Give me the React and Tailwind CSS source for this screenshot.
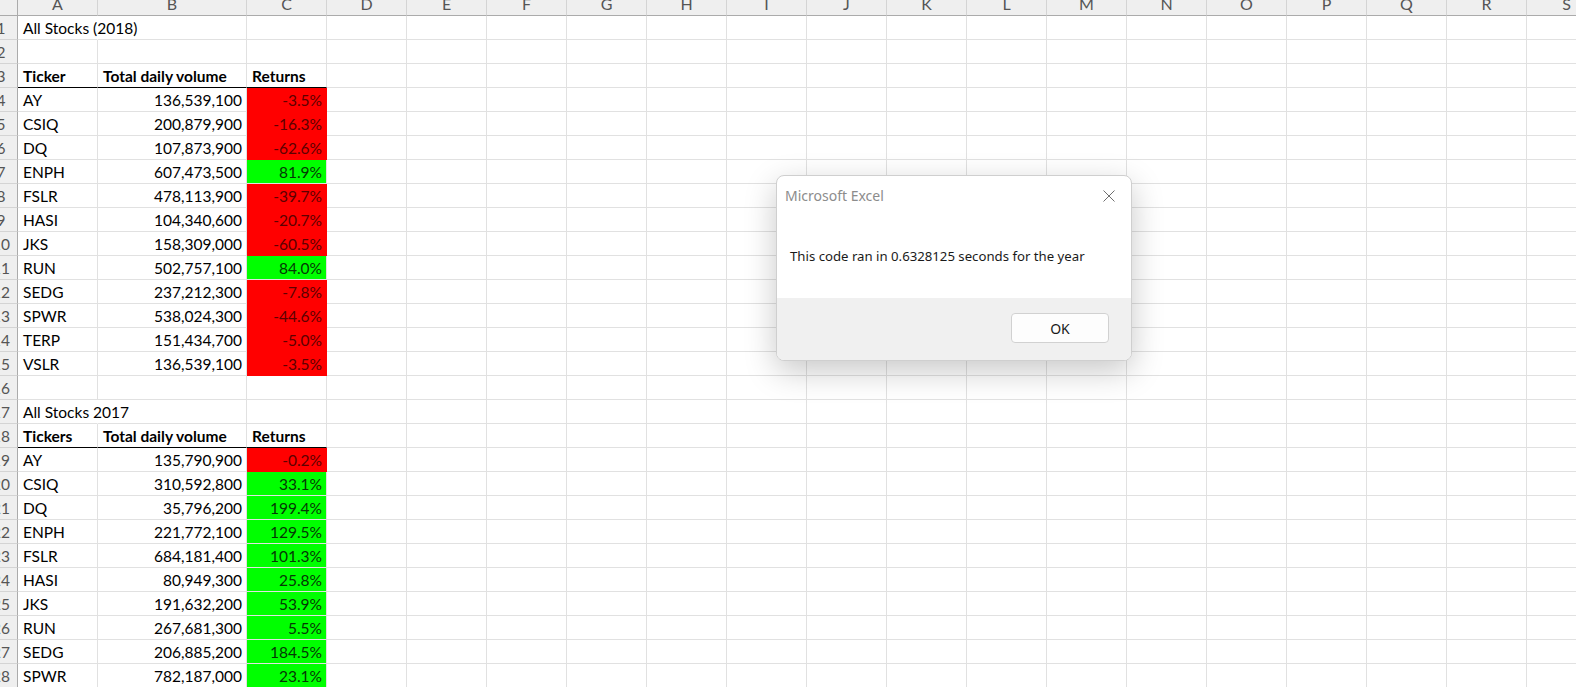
import React from 'react';

const COLS = ['A', 'B', 'C', 'D', 'E', 'F', 'G', 'H', 'I', 'J', 'K', 'L', 'M', 'N', 'O', 'P', 'Q', 'R', 'S'];

const colWidth = (c) => (c === 'B' ? 'w-[149px]' : 'w-[80px]');

const stocks2018 = [
  ['AY', '136,539,100', '-3.5%'],
  ['CSIQ', '200,879,900', '-16.3%'],
  ['DQ', '107,873,900', '-62.6%'],
  ['ENPH', '607,473,500', '81.9%'],
  ['FSLR', '478,113,900', '-39.7%'],
  ['HASI', '104,340,600', '-20.7%'],
  ['JKS', '158,309,000', '-60.5%'],
  ['RUN', '502,757,100', '84.0%'],
  ['SEDG', '237,212,300', '-7.8%'],
  ['SPWR', '538,024,300', '-44.6%'],
  ['TERP', '151,434,700', '-5.0%'],
  ['VSLR', '136,539,100', '-3.5%'],
];

const stocks2017 = [
  ['AY', '135,790,900', '-0.2%'],
  ['CSIQ', '310,592,800', '33.1%'],
  ['DQ', '35,796,200', '199.4%'],
  ['ENPH', '221,772,100', '129.5%'],
  ['FSLR', '684,181,400', '101.3%'],
  ['HASI', '80,949,300', '25.8%'],
  ['JKS', '191,632,200', '53.9%'],
  ['RUN', '267,681,300', '5.5%'],
  ['SEDG', '206,885,200', '184.5%'],
  ['SPWR', '782,187,000', '23.1%'],
];

const toRows = (list) => list.map(([a, b, c]) => ({ a, b, c, fill: c.startsWith('-') ? 'red' : 'green' }));

const rows = [
  { a: 'All Stocks (2018)', title: true },
  {},
  { a: 'Ticker', b: 'Total daily volume', c: 'Returns', head: true },
  ...toRows(stocks2018),
  {},
  { a: 'All Stocks 2017', title: true },
  { a: 'Tickers', b: 'Total daily volume', c: 'Returns', head: true },
  ...toRows(stocks2017),
];

const Cell = ({ col, row }) => {
  let cls = `${colWidth(col)} h-6 shrink-0 border-r border-b border-[#e1e1e1] whitespace-nowrap leading-[23px] pt-px`;
  let content = null;

  if (col === 'A') {
    content = row.a;
    cls += ' pl-[5px] text-left';
    if (row.title) cls += ' border-r-transparent overflow-visible relative z-10';
    else cls += ' overflow-hidden';
  }
  if (col === 'B') {
    content = row.b;
    cls += row.head ? ' pl-[5px] text-left' : ' pr-[4px] text-right';
  }
  if (col === 'C') {
    content = row.c;
    cls += row.head ? ' pl-[5px] text-left' : ' pr-[4px] text-right';
    if (row.fill === 'red') cls += ' bg-[#ff0000] border-[#ff0000] text-[#5c0000]';
    if (row.fill === 'green') cls += ' bg-[#00ff00] border-[#00ff00] text-[#053805]';
  }
  if (row.head && (col === 'A' || col === 'B' || col === 'C')) {
    cls += ' font-bold border-b-black';
  }

  return <div className={cls}>{content}</div>;
};

const MessageBox = () => (
  <div className="absolute left-[776px] top-[175px] w-[356px] h-[186px] rounded-[8px] border border-[#cfcfcf] bg-white shadow-[0_10px_32px_rgba(0,0,0,0.22)] flex flex-col overflow-hidden font-['Noto_Sans',sans-serif]">
    <div className="flex flex-col pl-[8px] pr-[16px] pt-[9px] h-[122px]">
      <div className="flex w-full justify-between items-center">
        <span className="text-[14px] text-[#8c8c8c]">Microsoft Excel</span>
        <svg width="12" height="12" viewBox="0 0 12 12">
          <path d="M0.5 0.5 L11.5 11.5 M11.5 0.5 L0.5 11.5" stroke="#6e6e6e" strokeWidth="1" fill="none" />
        </svg>
      </div>
      <p className="text-[13.2px] text-[#1a1a1a] pl-[5px] mt-[41px]">This code ran in 0.6328125 seconds for the year</p>
    </div>
    <div className="flex-1 bg-[#f0f0f0] flex justify-end items-start pt-[15px] pr-[22px]">
      <button className="w-[98px] h-[30px] rounded-[4px] border border-[#d1d1d1] bg-[#fdfdfd] text-[14px] text-[#1a1a1a]">OK</button>
    </div>
  </div>
);

export default function App() {
  return (
    <div className="w-[1576px] h-[687px] overflow-hidden bg-white relative font-['Lato',sans-serif] text-[15.5px] text-black">
      {/* column headers */}
      <div className="flex h-4">
        <div className="w-[18px] h-4 shrink-0 bg-[#efefef] border-r border-b border-[#ababab]"></div>
        {COLS.map((c) => (
          <div
            key={c}
            className={`${colWidth(c)} h-4 shrink-0 bg-[#efefef] border-r border-[#d4d4d4] border-b border-b-[#ababab] overflow-hidden flex justify-center items-end`}
          >
            <span className="text-[16px] leading-none mb-[3px] text-[#555]">{c}</span>
          </div>
        ))}
      </div>

      {/* sheet rows */}
      {rows.map((row, i) => (
        <div key={i} className="flex h-6">
          <div className="w-[18px] h-6 shrink-0 bg-[#efefef] border-r border-b border-[#d4d4d4] border-r-[#ababab] overflow-hidden flex justify-end">
            <span className="w-[32px] shrink-0 text-center leading-[23px] pt-px text-[#555]">{i + 1}</span>
          </div>
          {COLS.map((c) => (
            <Cell key={c} col={c} row={row} />
          ))}
        </div>
      ))}

      <MessageBox />
    </div>
  );
}
